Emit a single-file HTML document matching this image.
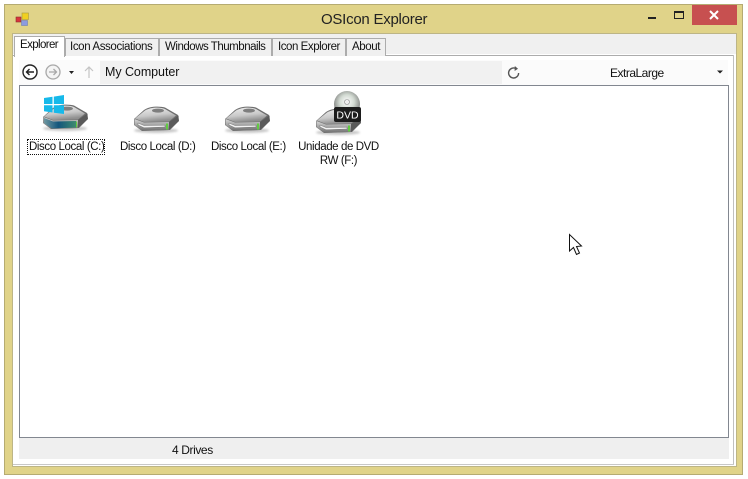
<!DOCTYPE html>
<html><head><meta charset="utf-8"><style>
html,body{margin:0;padding:0;background:#fff}
body{width:748px;height:479px;position:relative;overflow:hidden;font-family:"Liberation Sans",sans-serif;color:#111}
.a{position:absolute;box-sizing:border-box}
.t{position:absolute;white-space:nowrap;font-size:12px;line-height:14px}
.tab{position:absolute;box-sizing:border-box;top:38px;height:18px;background:#f0f0f0;border:1px solid #acacac;border-bottom:none}
</style></head><body>
<div class="a" style="left:4px;top:4px;width:739px;height:471px;background:#e0d389;border:1px solid #b5ab72"></div>
<div class="a" style="left:12px;top:33px;width:725px;height:434px;background:#fff;border:1px solid #bdb586"></div>
<div class="a" style="left:13px;top:34px;width:723px;height:20px;background:#f0f0f0"></div>
<div class="a" style="left:13px;top:55px;width:723px;height:409px;background:#fff;"></div>
<div class="a" style="left:13px;top:55px;width:721px;height:1px;background:#acacac"></div>
<div class="a" style="left:733px;top:55px;width:1px;height:409px;background:#c0c0c0"></div>
<div class="a" style="left:13px;top:464px;width:721px;height:1px;background:#c8c8c8"></div>

<!-- title bar -->
<svg class="a" style="left:15px;top:12px" width="15" height="15" viewBox="0 0 15 15"><rect x="7" y="1" width="6.5" height="6.5" fill="#f0d020" stroke="#a89a40" stroke-width=".6"/><rect x="1" y="5" width="5" height="5" fill="#d8343c" stroke="#8a3030" stroke-width=".6"/><rect x="6.5" y="8.5" width="6" height="5" fill="#8c9be0" stroke="#7080b0" stroke-width=".6"/></svg>
<div class="t" style="left:321px;top:11px;font-size:15px;line-height:18px;letter-spacing:-.25px;color:#222">OSIcon Explorer</div>
<div class="a" style="left:648px;top:17px;width:8px;height:2px;background:#222"></div>
<div class="a" style="left:674px;top:11px;width:10px;height:8px;border:1px solid #222;border-top-width:2px"></div>
<div class="a" style="left:692px;top:5px;width:45px;height:20px;background:#c75050"></div>
<svg class="a" style="left:708px;top:9px" width="12" height="12" viewBox="0 0 12 12"><path d="M2 2 L10 10 M10 2 L2 10" stroke="#fff" stroke-width="2"/></svg>

<!-- tabs -->
<div class="tab" style="left:14px;top:36px;width:51px;height:21px;background:#fff;border-bottom:none;z-index:2"></div>
<div class="t" style="left:20px;top:38px;z-index:3;font-size:11.5px;letter-spacing:-.6px">Explorer</div>
<div class="tab" style="left:65px;width:94px"></div>
<div class="t" style="left:70px;top:40px;font-size:11.5px;letter-spacing:-.38px">Icon Associations</div>
<div class="tab" style="left:159px;width:113px"></div>
<div class="t" style="left:165px;top:40px;font-size:11.5px;letter-spacing:-.48px">Windows Thumbnails</div>
<div class="tab" style="left:272px;width:74px"></div>
<div class="t" style="left:278px;top:40px;font-size:11.5px;letter-spacing:-.45px">Icon Explorer</div>
<div class="tab" style="left:346px;width:40px"></div>
<div class="t" style="left:352px;top:40px;font-size:11.5px;letter-spacing:-.4px">About</div>

<!-- toolbar -->
<div class="a" style="left:19px;top:60px;width:709px;height:25px;background:#fbfbfb"></div>
<div class="a" style="left:100px;top:61px;width:402px;height:23px;background:#f1f1f1"></div>
<svg class="a" style="left:20px;top:62px" width="100" height="20" viewBox="0 0 100 20">
<circle cx="10" cy="10" r="7" fill="#fff" stroke="#222" stroke-width="1.4"/>
<path d="M14 10 H6.5 M9.5 7 L6.5 10 L9.5 13" fill="none" stroke="#222" stroke-width="1.4"/>
<circle cx="33" cy="10" r="7" fill="#f4f4f4" stroke="#a8a8a8" stroke-width="1.3"/>
<path d="M29 10 H36.5 M33.5 7 L36.5 10 L33.5 13" fill="none" stroke="#a8a8a8" stroke-width="1.3"/>
<path d="M49 9 H54 L51.5 12 Z" fill="#222"/>
<path d="M69 16 V5 M65 9 L69 5 L73 9" fill="none" stroke="#c4c4c4" stroke-width="1.2"/>
</svg>
<div class="t" style="left:105px;top:65px;font-size:12.5px;letter-spacing:-.06px">My Computer</div>
<svg class="a" style="left:506px;top:65px" width="16" height="16" viewBox="0 0 16 16"><path d="M12.6 8 A5 5 0 1 1 10 3.6" fill="none" stroke="#555" stroke-width="1.4"/><path d="M8.8 1 L12 3.8 L8.6 6 Z" fill="#555"/></svg>
<div class="t" style="left:610px;top:66px;font-size:12px;letter-spacing:-.5px">ExtraLarge</div>
<svg class="a" style="left:716px;top:69px" width="8" height="6"><path d="M1 1.5 H7 L4 4.5 Z" fill="#222"/></svg>

<!-- list view -->
<div class="a" style="left:19px;top:85px;width:710px;height:353px;background:#fff;border:1px solid #828790"></div>

<svg class="a" style="left:0;top:0;pointer-events:none" width="748" height="479" viewBox="0 0 748 479">
<defs>
<linearGradient id="top" x1="0" y1="0" x2=".3" y2="1"><stop offset="0" stop-color="#eeeeee"/><stop offset=".6" stop-color="#c9c9c9"/><stop offset="1" stop-color="#8f8f8f"/></linearGradient>
<linearGradient id="front" x1="0" y1="0" x2="0" y2="1"><stop offset="0" stop-color="#d8d8d8"/><stop offset="1" stop-color="#6f6f6f"/></linearGradient>
<linearGradient id="g3" x1="0" y1="0" x2="1" y2="0"><stop offset="0" stop-color="#6f97a0"/><stop offset=".45" stop-color="#14567c"/><stop offset="1" stop-color="#3f8a70"/></linearGradient>
<radialGradient id="g4" cx=".5" cy=".42" r=".62"><stop offset="0" stop-color="#fff"/><stop offset=".45" stop-color="#d2dad2"/><stop offset="1" stop-color="#6a6a6a"/></radialGradient>
<filter id="b" x="-20%" y="-20%" width="140%" height="140%"><feGaussianBlur stdDeviation=".35"/></filter>
<filter id="s" x="-20%" y="-50%" width="140%" height="200%"><feGaussianBlur stdDeviation="1"/></filter>
<g id="d">
<ellipse cx="23" cy="24.5" rx="22" ry="2.5" fill="#999" opacity=".55" filter="url(#s)"/>
<path d="M1 13 L11 4 C16 0 27 0 32 1.5 L45 9 L46 15 L37 24 L9 25 L1 19 Z" fill="#6e6e6e"/>
<path d="M2 12.5 L12 4.5 C18 1 27 1 32 3 L43 9.5 L36 15.5 L11 16 Z" fill="url(#top)"/>
<ellipse cx="25" cy="4.6" rx="6" ry="2" fill="#7e7e7e"/>
<path d="M1.5 13 L11 16.5 L36 16 L36 24 L9.5 24.8 L1.5 19 Z" fill="url(#front)"/>
<path d="M5 17 L11 19.5 L32 19.2 L32 21 L11 21.8 L5 19 Z" fill="#f2f2f2" stroke="#777" stroke-width=".5"/>
<path d="M36 16 L45.5 9.5 L45.8 15 L36 24 Z" fill="#5a5a5a"/>
<rect x="33" y="17.5" width="2" height="6" fill="#62cc42"/>
</g>
</defs>
<g filter="url(#b)">
<!-- C -->
<use href="#d" x="42" y="104"/>
<path d="M44 118 L53 121.5 L76 121 L76 127.5 L52 128.5 L44 123 Z" fill="url(#g3)"/>
<path d="M44 98 L52.5 96.8 V104 H44 Z M53.8 96.6 L64 95 V104 H53.8 Z M44 105.2 H52.5 V112.5 L44 111.3 Z M53.8 105.2 H64 V114 L53.8 112.7 Z" fill="#19b9ea"/>
<!-- D -->
<use href="#d" x="133" y="106"/>
<!-- E -->
<use href="#d" x="224" y="106"/>
<!-- F -->
<use href="#d" x="315" y="108"/>
<circle cx="347" cy="104" r="13" fill="url(#g4)"/>
<circle cx="347" cy="102" r="2.5" fill="#eee" stroke="#888" stroke-width=".6"/>
<rect x="334" y="107" width="27" height="15" rx="2" fill="#1c1c1c"/>
</g>
<text x="347.5" y="118.5" font-family="Liberation Sans" font-size="10.5" fill="#fff" text-anchor="middle">DVD</text>
</svg>

<div class="a" style="left:27px;top:139px;width:78px;height:16px;border:1px dotted #111"></div>
<div class="t" style="left:29px;top:140px;font-size:11.5px;letter-spacing:-.4px">Disco Local (C:)</div>
<div class="t" style="left:120px;top:140px;font-size:11.5px;letter-spacing:-.4px">Disco Local (D:)</div>
<div class="t" style="left:211px;top:140px;font-size:11.5px;letter-spacing:-.4px">Disco Local (E:)</div>
<div class="t" style="left:298px;top:140px;width:81px;text-align:center;font-size:11.5px;letter-spacing:-.4px">Unidade de DVD</div>
<div class="t" style="left:298px;top:154px;width:81px;text-align:center;font-size:11.5px;letter-spacing:-.4px">RW (F:)</div>

<!-- cursor -->
<svg class="a" style="left:568px;top:233px" width="16" height="24" viewBox="0 0 16 24"><path d="M1.5 1.5 V18 L5.5 14.5 L8.5 21.5 L11.5 20 L8.5 13.5 L13.5 13 Z" fill="#fff" stroke="#111" stroke-width="1"/></svg>

<!-- status -->
<div class="a" style="left:19px;top:438px;width:710px;height:21px;background:#efefef"></div>
<div class="t" style="left:172px;top:443px;font-size:12px;letter-spacing:-.4px">4 Drives</div>
</body></html>
